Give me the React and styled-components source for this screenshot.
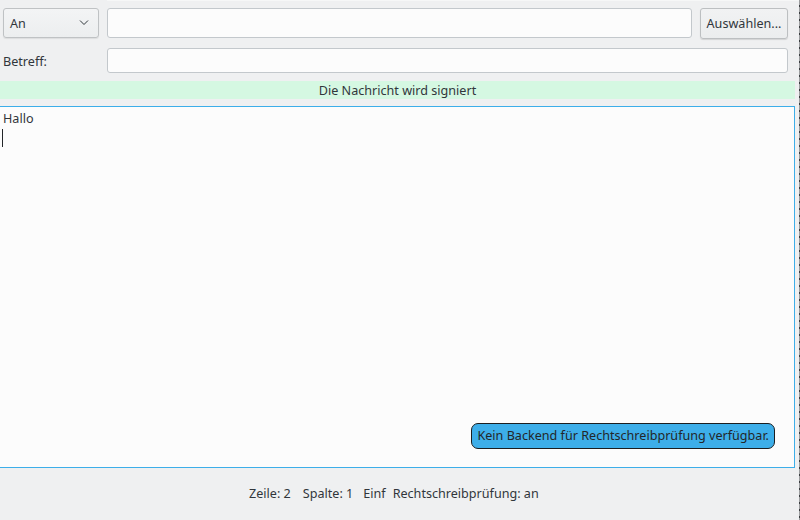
import React from "react";
import styled, { createGlobalStyle } from "styled-components";

const Global = createGlobalStyle`
  html, body { margin: 0; padding: 0; }
  body {
    background: #eff0f1;
    font-family: "Noto Sans", "DejaVu Sans", sans-serif;
    font-size: 12.6px;
    color: #31363b;
  }
`;

const Window = styled.div`
  width: 800px;
  height: 520px;
  display: flex;
  overflow: hidden;
  background: #eff0f1;
`;

const Content = styled.div`
  flex: 1;
  display: flex;
  flex-direction: column;
  min-width: 0;
`;

const EdgeLine = styled.div`
  width: 1px;
  background: repeating-linear-gradient(
    to bottom,
    #9a9c9e 0px,
    #9a9c9e 5px,
    #3a3d40 5px,
    #3a3d40 7px
  );
`;

const TopSliver = styled.div`
  height: 1px;
  margin-left: 107px;
  background: #f6f7f7;
`;

const HeaderGrid = styled.div`
  display: grid;
  grid-template-columns: 96px 1fr 88px;
  column-gap: 8px;
  row-gap: 9px;
  padding: 7px 11px 0 3px;
  align-items: start;
`;

const Combo = styled.div`
  height: 30px;
  box-sizing: border-box;
  border: 1px solid #bfc2c4;
  border-radius: 3px;
  background: linear-gradient(#f3f4f5, #eceeef);
  box-shadow: 0 1px 1px rgba(0, 0, 0, 0.08);
  display: flex;
  align-items: center;
  justify-content: space-between;
  padding: 0 9px 0 6px;
`;

const TextField = styled.div`
  height: ${(p) => p.$h}px;
  box-sizing: border-box;
  border: 1px solid #c3c8cc;
  border-radius: 3px;
  background: #fcfcfc;
  grid-column: ${(p) => p.$span || "auto"};
`;

const Button = styled.div`
  height: 31px;
  box-sizing: border-box;
  border: 1px solid #bcbfc1;
  border-radius: 3px;
  background: linear-gradient(#f1f2f3, #ebedee);
  box-shadow: 0 1px 1px rgba(0, 0, 0, 0.12);
  display: flex;
  align-items: center;
  justify-content: center;
  padding-bottom: 1px;
`;

const Label = styled.div`
  align-self: center;
  padding-top: 1px;
`;

const SignBar = styled.div`
  margin: 8px 4px 0 0;
  height: 18px;
  background: #d5f8e2;
  display: flex;
  align-items: center;
  justify-content: center;
`;

const Editor = styled.div`
  position: relative;
  margin: 7px 4px 0 -1px;
  height: 362px;
  box-sizing: border-box;
  border: 1px solid #3daee9;
  background: #fcfcfc;
  padding: 3px 2px 0 3px;
  line-height: 18px;
`;

const Line = styled.div`
  height: 18px;
`;

const Caret = styled.span`
  display: inline-block;
  width: 1px;
  height: 18px;
  margin-left: -1px;
  margin-top: 1px;
  background: #232629;
  vertical-align: top;
`;

const Bubble = styled.div`
  position: absolute;
  right: 19px;
  bottom: 18px;
  height: 26px;
  box-sizing: border-box;
  padding: 0 5px;
  display: flex;
  align-items: center;
  background: #3daee9;
  border: 1px solid #1b1e20;
  border-radius: 7px;
  color: #232629;
  white-space: nowrap;
`;

const StatusBar = styled.div`
  flex: 1;
  display: flex;
  align-items: center;
  padding-left: 249px;
  padding-bottom: 1px;
`;

const StatusItem = styled.span`
  margin-right: ${(p) => p.$gap || 0}px;
  white-space: nowrap;
`;

function Chevron() {
  return (
    <svg width="10" height="6" viewBox="0 0 10 6">
      <path d="M1 0.5 L5 4.5 L9 0.5" fill="none" stroke="#31363b" strokeWidth="1" />
    </svg>
  );
}

export default function App() {
  return (
    <>
      <Global />
      <Window>
        <Content>
          <TopSliver />
          <HeaderGrid>
            <Combo>
              <span>An</span>
              <Chevron />
            </Combo>
            <TextField $h={30} />
            <Button>Auswählen...</Button>
            <Label>Betreff:</Label>
            <TextField $h={25} $span="2 / 4" />
          </HeaderGrid>
          <SignBar>Die Nachricht wird signiert</SignBar>
          <Editor>
            <Line>Hallo</Line>
            <Line>
              <Caret />
            </Line>
            <Bubble>Kein Backend für Rechtschreibprüfung verfügbar.</Bubble>
          </Editor>
          <StatusBar>
            <StatusItem $gap={12}>Zeile: 2</StatusItem>
            <StatusItem $gap={10}>Spalte: 1</StatusItem>
            <StatusItem $gap={7}>Einf</StatusItem>
            <StatusItem>Rechtschreibprüfung: an</StatusItem>
          </StatusBar>
        </Content>
        <EdgeLine />
      </Window>
    </>
  );
}
